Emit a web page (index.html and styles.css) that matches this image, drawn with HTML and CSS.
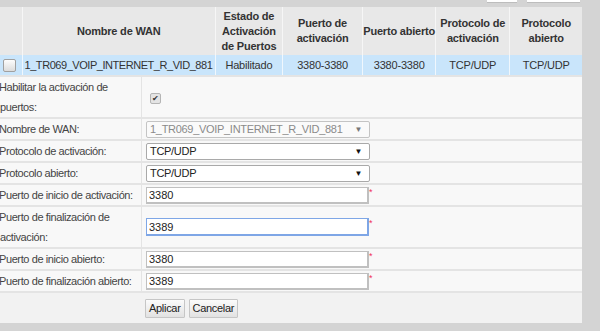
FILE: index.html
```html
<!DOCTYPE html>
<html lang="es">
<head>
    <meta charset="UTF-8">
    <title>Activación de puertos</title>
    <link rel="stylesheet" href="styles.css">
</head>
<body>

    <div class="top-strip">
        <span class="edge-btn edge-short"></span>
        <span class="edge-btn edge-long"></span>
    </div>

    <div class="panel">
        <table class="list">
            <colgroup>
                <col style="width: 22px">
                <col style="width: 193px">
                <col style="width: 67px">
                <col style="width: 80px">
                <col style="width: 73px">
                <col style="width: 74px">
                <col style="width: 72px">
            </colgroup>
            <thead>
                <tr>
                    <th></th>
                    <th>Nombre de WAN</th>
                    <th>Estado de<br>Activación<br>de Puertos</th>
                    <th>Puerto de<br>activación</th>
                    <th>Puerto abierto</th>
                    <th>Protocolo de<br>activación</th>
                    <th>Protocolo<br>abierto</th>
                </tr>
            </thead>
            <tbody>
                <tr class="selected">
                    <td><span class="box"></span></td>
                    <td class="left">1_TR069_VOIP_INTERNET_R_VID_881</td>
                    <td>Habilitado</td>
                    <td>3380-3380</td>
                    <td>3380-3380</td>
                    <td>TCP/UDP</td>
                    <td>TCP/UDP</td>
                </tr>
            </tbody>
        </table>

        <table class="form">
            <tr class="tall">
                <td class="label">Habilitar la activación de<br>puertos:</td>
                <td><span class="check">&#10004;</span></td>
            </tr>
            <tr>
                <td class="label">Nombre de WAN:</td>
                <td>
                    <span class="select disabled">1_TR069_VOIP_INTERNET_R_VID_881<span class="arrow">&#9660;</span></span>
                </td>
            </tr>
            <tr>
                <td class="label">Protocolo de activación:</td>
                <td><span class="select">TCP/UDP<span class="arrow">&#9660;</span></span></td>
            </tr>
            <tr>
                <td class="label">Protocolo abierto:</td>
                <td><span class="select">TCP/UDP<span class="arrow">&#9660;</span></span></td>
            </tr>
            <tr>
                <td class="label">Puerto de inicio de activación:</td>
                <td><input type="text" value="3380"><span class="req">*</span></td>
            </tr>
            <tr class="tall">
                <td class="label">Puerto de finalización de<br>activación:</td>
                <td><input type="text" class="focused" value="3389"><span class="req">*</span></td>
            </tr>
            <tr>
                <td class="label">Puerto de inicio abierto:</td>
                <td><input type="text" value="3380"><span class="req">*</span></td>
            </tr>
            <tr>
                <td class="label">Puerto de finalización abierto:</td>
                <td><input type="text" value="3389"><span class="req">*</span></td>
            </tr>
        </table>

        <div class="actions">
            <button>Aplicar</button>
            <button>Cancelar</button>
        </div>
    </div>

</body>
</html>
```

FILE: styles.css
```css
body {
    margin: 0;
    background-color: #d4d4d4;
    font-family: "Liberation Sans", Arial, sans-serif;
    font-size: 11px;
    color: #333;
}
/* bottom of the buttons from the block above */
.top-strip {
    height: 7px;
    display: flex;
    gap: 10px;
    padding-left: 487px;
}
.edge-btn {
    height: 2px;
    background-color: #fff;
    border-bottom: 1px solid #bdbdbd;
}
.edge-short {
    width: 30px;
}
.edge-long {
    width: 53px;
}
.panel {
    width: 582px;
    background-color: #f8f8f8;
}
.list {
    width: 582px;
    table-layout: fixed;
    border-collapse: collapse;
}
.list th {
    height: 48px;
    padding: 0;
    background-color: #e8e8e8;
    border-left: 1px solid #f6f6f6;
    font-weight: bold;
    line-height: 15px;
    letter-spacing: -0.2px;
    color: #333;
    text-align: center;
    white-space: nowrap;
}
.list th:first-child {
    border-left: none;
}
.list td {
    height: 20px;
    padding: 0;
    text-align: center;
    border-left: 1px solid #f0f7fd;
    letter-spacing: -0.2px;
    white-space: nowrap;
    overflow: hidden;
    color: #333;
}
.list td:first-child {
    border-left: none;
}
.list td.left {
    text-align: left;
    padding-left: 2px;
    letter-spacing: -0.45px;
}
.selected td {
    background-color: #c9e5fb;
    border-bottom: 2px solid #e4e4e4;
}
.box {
    display: block;
    width: 11px;
    height: 11px;
    margin-left: 3px;
    border: 1px solid #a0a0a0;
    border-radius: 2px;
    background: linear-gradient(#fdfdfd, #dcdcdc);
}
.form {
    width: 582px;
    border-collapse: collapse;
}
.form td {
    height: 19px;
    padding: 0;
    border-bottom: 2px solid #e4e4e4;
}
.form tr.tall td {
    height: 40px;
}
.form td.label {
    width: 141px;
    padding-left: 0;
    text-indent: -1px;
    line-height: 20px;
    letter-spacing: -0.4px;
    white-space: nowrap;
    border-right: 1px solid #e4e4e4;
    color: #444;
}
.form td + td {
    padding-left: 4px;
}
.check {
    display: inline-block;
    width: 9px;
    height: 9px;
    margin-left: 4px;
    border: 1px solid #b5b5b5;
    border-radius: 2px;
    background-color: #e4e4e4;
    font-size: 8px;
    line-height: 9px;
    text-align: center;
    color: #333;
}
.select {
    position: relative;
    display: block;
    box-sizing: border-box;
    width: 224px;
    height: 17px;
    padding-left: 3px;
    border: 1px solid #a9a9a9;
    border-radius: 2px;
    background-color: #fff;
    line-height: 15px;
    letter-spacing: -0.3px;
    color: #222;
}
.select.disabled {
    border-color: #c4c4c4;
    background-color: #fafafa;
    color: #8a8a8a;
}
.arrow {
    position: absolute;
    right: 7px;
    top: 0;
    font-size: 8px;
    color: #111;
}
.disabled .arrow {
    color: #777;
}
input[type=text] {
    box-sizing: border-box;
    width: 223px;
    height: 17px;
    margin: 0;
    padding: 0 2px;
    border: 1px solid #c0c0c0;
    border-right-width: 2px;
    border-bottom-width: 2px;
    background-color: #fff;
    font-family: "Liberation Sans", Arial, sans-serif;
    font-size: 11px;
    color: #222;
    vertical-align: middle;
}
input.focused {
    height: 18px;
    border: 1px solid #7ea6e6;
    border-right-width: 2px;
    border-bottom-width: 2px;
}
.req {
    display: inline-block;
    vertical-align: top;
    margin-top: 1px;
    font-size: 9px;
    line-height: 9px;
    color: #f0325a;
}
.actions {
    height: 30px;
    padding-left: 145px;
    display: flex;
    align-items: center;
    gap: 4px;
    background-color: #f2f2f2;
}
.actions button {
    height: 19px;
    padding: 0 3px;
    border: 1px solid #c6c6c6;
    border-radius: 1px;
    background: linear-gradient(#fbfbfb, #e2e2e2);
    font-family: "Liberation Sans", Arial, sans-serif;
    font-size: 11px;
    letter-spacing: -0.3px;
    color: #222;
}
```
